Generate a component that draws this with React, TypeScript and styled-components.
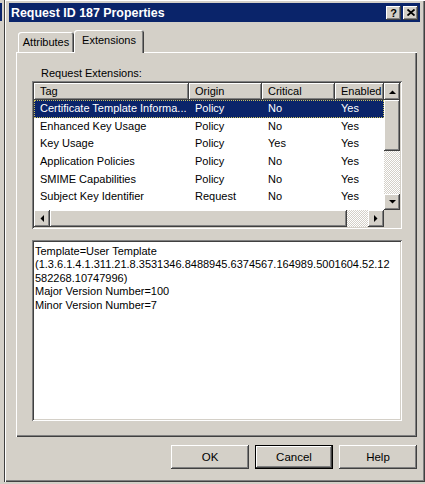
import React from "react";
import styled, { createGlobalStyle, css } from "styled-components";

const face = "#d4d0c8";

const raised = css`
  box-shadow: inset -1px -1px 0 #404040, inset 1px 1px 0 #ffffff,
    inset -2px -2px 0 #808080, inset 2px 2px 0 ${face};
`;

const sunken = css`
  box-shadow: inset 1px 1px 0 #808080, inset -1px -1px 0 #ffffff,
    inset 2px 2px 0 #404040, inset -2px -2px 0 ${face};
`;

const checker = css`
  background: repeating-conic-gradient(#ffffff 0 25%, ${face} 0 50%) 0 0 / 2px 2px;
`;

const GlobalStyle = createGlobalStyle`
  html, body {
    margin: 0;
    padding: 0;
    background: ${face};
  }
  body {
    font-family: "Liberation Sans", Arial, sans-serif;
    font-size: 11px;
    color: #000;
  }
  * { box-sizing: border-box; }
`;

const Screen = styled.div`
  width: 425px;
  height: 484px;
  display: flex;
  overflow: hidden;
  background: ${face};
`;

const BackWindow = styled.div`
  width: 4px;
  flex-shrink: 0;
  padding-top: 3px;
`;

const BackTitle = styled.div`
  width: 2px;
  height: 18px;
  background: #0a246a;
`;

const Dialog = styled.div`
  width: 421px;
  height: 482px;
  display: flex;
  flex-direction: column;
  padding: 3px 5px 4px 5px;
  box-shadow: inset 1px 0 0 #404040, inset 2px 1px 0 #ffffff,
    inset -1px -1px 0 #404040, inset -2px -2px 0 #808080;
`;

const TitleBar = styled.div`
  height: 19px;
  flex-shrink: 0;
  display: flex;
  align-items: center;
  padding-left: 2px;
  background: #0a246a;
  color: #fff;
  font-weight: bold;
  font-size: 12.4px;
`;

const TitleText = styled.div`
  flex: 1;
  white-space: nowrap;
`;

const CaptionButton = styled.div<{ $gap?: number }>`
  width: 15px;
  height: 14px;
  margin-left: ${(p) => p.$gap ?? 0}px;
  display: flex;
  align-items: center;
  justify-content: center;
  background: ${face};
  color: #000;
  font-size: 11px;
  font-weight: bold;
  ${raised}
`;

const Body = styled.div`
  flex: 1;
  display: flex;
  flex-direction: column;
  padding: 8px 3px 0 7px;
`;

const TabRow = styled.div`
  height: 22px;
  display: flex;
  align-items: flex-end;
  padding-left: 2px;
`;

const Tab = styled.div<{ $active?: boolean; $width: number }>`
  width: ${(p) => p.$width}px;
  height: ${(p) => (p.$active ? 23 : 20)}px;
  margin-bottom: ${(p) => (p.$active ? -1 : 0)}px;
  position: relative;
  z-index: ${(p) => (p.$active ? 1 : 0)};
  display: flex;
  align-items: center;
  justify-content: center;
  padding-bottom: ${(p) => (p.$active ? 3 : 0)}px;
  background: ${face};
  border-radius: 3px 3px 0 0;
  box-shadow: inset 1px 1px 0 #ffffff, inset -1px 0 0 #404040,
    inset -2px 0 0 #808080;
  white-space: nowrap;
`;

const Panel = styled.div`
  height: 385px;
  flex-shrink: 0;
  display: flex;
  flex-direction: column;
  padding: 14px 0 0 16px;
  box-shadow: inset 1px 1px 0 #ffffff, inset -1px -1px 0 #404040,
    inset -2px -2px 0 #808080;
`;

const Label = styled.div`
  height: 15px;
  line-height: 15px;
  padding-left: 9px;
`;

const ListBox = styled.div`
  width: 370px;
  height: 148px;
  padding: 2px;
  display: grid;
  grid-template-columns: 350px 16px;
  grid-template-rows: 1fr 17px;
  background: #fff;
  ${sunken}
`;

const Table = styled.div`
  overflow: hidden;
  background: #fff;
`;

const columns = "155px 73px 73px 49px";

const HeaderRow = styled.div`
  height: 17px;
  display: grid;
  grid-template-columns: ${columns};
`;

const HeaderCell = styled.div`
  padding-left: 6px;
  line-height: 17px;
  white-space: nowrap;
  overflow: hidden;
  background: ${face};
  box-shadow: inset -1px -1px 0 #404040, inset 1px 1px 0 #ffffff,
    inset -2px -2px 0 #808080;
`;

const DataRow = styled.div<{ $selected?: boolean }>`
  height: 17.7px;
  display: grid;
  grid-template-columns: ${columns};
  line-height: 17px;
  background: ${(p) => (p.$selected ? "#0a246a" : "transparent")};
  color: ${(p) => (p.$selected ? "#fff" : "#000")};
  outline: ${(p) => (p.$selected ? "1px dotted #c8c060" : "none")};
  outline-offset: -1px;
`;

const Cell = styled.div`
  padding-left: 6px;
  white-space: nowrap;
  overflow: hidden;
`;

const VScroll = styled.div`
  display: flex;
  flex-direction: column;
`;

const HScroll = styled.div`
  display: flex;
`;

const ScrollButton = styled.div<{ $h?: number }>`
  width: 16px;
  height: ${(p) => p.$h ?? 17}px;
  flex-shrink: 0;
  display: flex;
  align-items: center;
  justify-content: center;
  background: ${face};
  ${raised}
`;

const Thumb = styled.div<{ $size: number; $vertical?: boolean }>`
  ${(p) => (p.$vertical ? `height: ${p.$size}px;` : `width: ${p.$size}px;`)}
  flex-shrink: 0;
  background: ${face};
  ${raised}
`;

const Track = styled.div`
  flex: 1;
  ${checker}
`;

const Corner = styled.div`
  background: ${face};
`;

const TextBox = styled.div`
  margin-top: 11px;
  width: 370px;
  height: 181px;
  padding: 5px 3px 4px;
  background: #fff;
  white-space: pre;
  line-height: 13.4px;
  ${sunken}
`;

const ButtonRow = styled.div`
  display: flex;
  justify-content: flex-end;
  gap: 6px;
  margin-top: 8px;
`;

const Button = styled.div<{ $default?: boolean }>`
  width: 78px;
  height: 24px;
  display: flex;
  align-items: center;
  justify-content: center;
  background: ${face};
  font-size: 11.5px;
  ${(p) =>
    p.$default
      ? css`
          box-shadow: inset 0 0 0 1px #000000, inset -2px -2px 0 #404040,
            inset 2px 2px 0 #ffffff, inset -3px -3px 0 #808080;
        `
      : raised}
`;

const Arrow = ({ dir }: { dir: "up" | "down" | "left" | "right" }) => {
  const pts = {
    up: "0,4 7,4 3.5,0.5",
    down: "0,0 7,0 3.5,3.5",
    left: "4,0 4,7 0.5,3.5",
    right: "0,0 0,7 3.5,3.5",
  }[dir];
  const vertical = dir === "up" || dir === "down";
  return (
    <svg width={vertical ? 7 : 4} height={vertical ? 4 : 7} viewBox={vertical ? "0 0 7 4" : "0 0 4 7"}>
      <polygon points={pts} fill="#000" />
    </svg>
  );
};

const rows = [
  ["Certificate Template Informa...", "Policy", "No", "Yes"],
  ["Enhanced Key Usage", "Policy", "No", "Yes"],
  ["Key Usage", "Policy", "Yes", "Yes"],
  ["Application Policies", "Policy", "No", "Yes"],
  ["SMIME Capabilities", "Policy", "No", "Yes"],
  ["Subject Key Identifier", "Request", "No", "Yes"],
];

const detail = [
  "Template=User Template",
  "(1.3.6.1.4.1.311.21.8.3531346.8488945.6374567.164989.5001604.52.12",
  "582268.10747996)",
  "Major Version Number=100",
  "Minor Version Number=7",
].join("\n");

export default function App() {
  return (
    <Screen>
      <GlobalStyle />
      <BackWindow>
        <BackTitle />
      </BackWindow>
      <Dialog>
        <TitleBar>
          <TitleText>Request ID 187 Properties</TitleText>
          <CaptionButton>?</CaptionButton>
          <CaptionButton $gap={2}>
            <svg width="8" height="7" viewBox="0 0 8 7">
              <path d="M0.5 0.5 L7.5 6.5 M7.5 0.5 L0.5 6.5" stroke="#000" strokeWidth="1.8" />
            </svg>
          </CaptionButton>
          <div style={{ width: 2 }} />
        </TitleBar>
        <Body>
          <TabRow>
            <Tab $width={56}>Attributes</Tab>
            <Tab $width={70} $active>
              Extensions
            </Tab>
          </TabRow>
          <Panel>
            <Label>Request Extensions:</Label>
            <ListBox>
              <Table>
                <HeaderRow>
                  <HeaderCell>Tag</HeaderCell>
                  <HeaderCell>Origin</HeaderCell>
                  <HeaderCell>Critical</HeaderCell>
                  <HeaderCell>Enabled</HeaderCell>
                </HeaderRow>
                {rows.map((r, i) => (
                  <DataRow key={r[0]} $selected={i === 0}>
                    {r.map((c, j) => (
                      <Cell key={j}>{c}</Cell>
                    ))}
                  </DataRow>
                ))}
              </Table>
              <VScroll>
                <ScrollButton>
                  <Arrow dir="up" />
                </ScrollButton>
                <Thumb $vertical $size={51} />
                <Track />
                <ScrollButton $h={16}>
                  <Arrow dir="down" />
                </ScrollButton>
              </VScroll>
              <HScroll>
                <ScrollButton>
                  <Arrow dir="left" />
                </ScrollButton>
                <Thumb $size={297} />
                <Track />
                <ScrollButton>
                  <Arrow dir="right" />
                </ScrollButton>
              </HScroll>
              <Corner />
            </ListBox>
            <TextBox>{detail}</TextBox>
          </Panel>
          <ButtonRow>
            <Button>OK</Button>
            <Button $default>Cancel</Button>
            <Button>Help</Button>
          </ButtonRow>
        </Body>
      </Dialog>
    </Screen>
  );
}
